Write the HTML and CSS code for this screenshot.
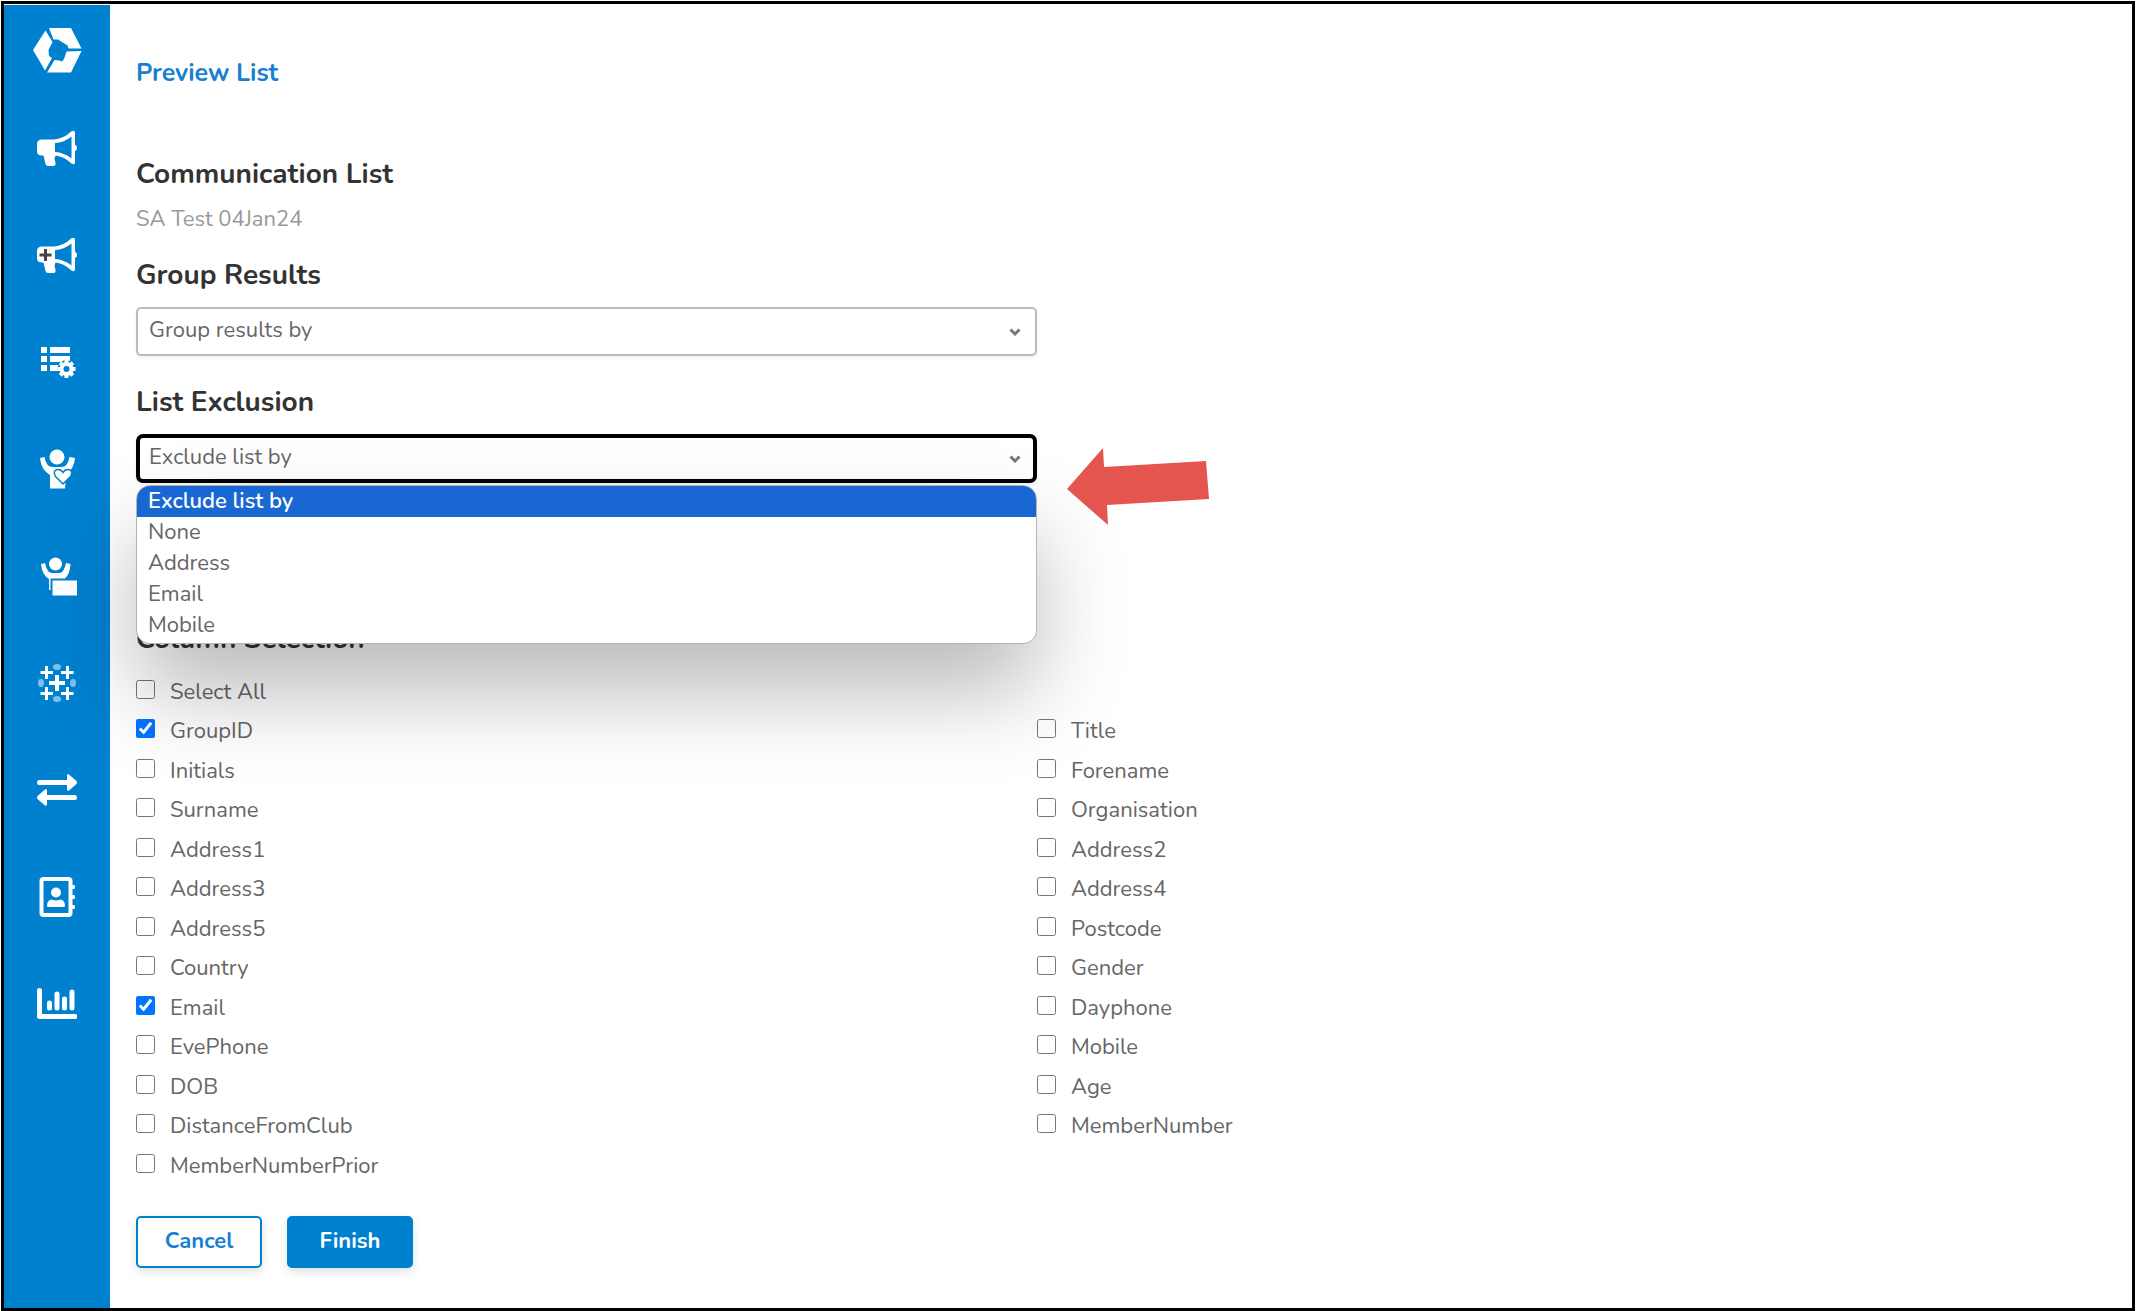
FILE: index.html
```html
<!DOCTYPE html>
<html lang="en">
<head>
<meta charset="utf-8">
<title>Preview List</title>
<link rel="stylesheet" href="styles.css">
</head>
<body>
<div class="app">
  <nav class="sidebar" aria-label="Main">
    <a class="logo" href="#" aria-label="Home"><svg width="50" height="46" viewBox="-1 0 50 46"><path d="M16 1H38L48.500 21.500H35.500L34.500 18.500 25 12.500 20.500 12.500ZM12.500 3.500 19.500 15 15.500 23 16 29 19 31 12 43.500 0 23ZM48.500 24 38 45.500H14L21.500 33 26.500 33.500 29 34.500 31 32 33.500 24.500Z"/></svg></a>
    <a href="#" aria-label="Campaigns"><svg viewBox="0 0 40 40"><path fill-rule="evenodd" d="M5 11.500H17Q26 11 34.500 3.200Q38 1.500 38 5V16.500Q40 17.500 40 20T38 23V34Q38 37.500 34.500 35.500Q27 28.500 19 27.500Q16.500 29.500 18.500 34.500Q19 38 16 38H11Q9 38 8.500 36L6.500 27.500H5Q0 27.500 0 23.500V16Q0 11.500 5 11.500ZM18 15V24Q27 24.500 34.500 30.500V8.500Q27 14.500 18 15Z"/></svg></a>
    <a href="#" aria-label="New campaign"><svg viewBox="0 0 40 40"><path fill-rule="evenodd" d="M5 11.500H17Q26 11 34.500 3.200Q38 1.500 38 5V16.500Q40 17.500 40 20T38 23V34Q38 37.500 34.500 35.500Q27 28.500 19 27.500Q16.500 29.500 18.500 34.500Q19 38 16 38H11Q9 38 8.500 36L6.500 27.500H5Q0 27.500 0 23.500V16Q0 11.500 5 11.500ZM18 15V24Q27 24.500 34.500 30.500V8.500Q27 14.500 18 15Z"/><path class="dark" d="M8.500 14V26M2.500 20H14.500"/></svg></a>
    <a href="#" aria-label="List settings"><svg viewBox="0 0 40 40"><path d="M4 5H10V11H4ZM13 5H33V11H13ZM4 14H10V20H4ZM13 14H33V20H13ZM4 23H10V29H4ZM13 23H24V29H13Z"/><circle cx="29.500" cy="27" r="9" class="cut"/><circle cx="29.500" cy="27" r="5" class="ring"/><path class="teeth" d="M29.500 21V18M29.500 33V36M23.500 27H20.500M35.500 27H38.500M25.300 22.800 23.200 20.700M33.700 22.800 35.800 20.700M25.300 31.200 23.200 33.300M33.700 31.200 35.800 33.300"/></svg></a>
    <a href="#" aria-label="Supporters"><svg viewBox="0 0 40 40"><circle cx="20" cy="8" r="7.500"/><path d="M3 9 7.500 8Q9 18 16 18H24Q31 18 32.500 8L38 9Q37 20 29 25L28 39.500H13V26Q4 21 3 9Z"/><path class="heart" d="M26 35 18.500 27.500Q15.500 22 20 20.500 24 20 26 23.500 28 20 32 20.500 36.500 22 33.500 27.500Z"/></svg></a>
    <a href="#" aria-label="Members"><svg viewBox="0 0 40 40"><circle cx="18.500" cy="8" r="6.500"/><path d="M4 8 8 7Q10 17 15 17H22Q27 17 29 7L33.500 8Q33 18 28 22.500H13.500V34H12V23Q5 19 4 8ZM15.500 24.500H40V39.500H15.500Z"/></svg></a>
    <a href="#" aria-label="Analytics"><svg viewBox="0 0 40 40"><path class="plus-lg" d="M20 12V28M12 20H28"/><path class="plus-sm" d="M9.500 3V16M3.500 9.500H16M30.500 3V16M24 9.500H36.500M9.500 24V37M3.500 30.500H16M30.500 24V37M24 30.500H36.500"/><g class="faint"><ellipse cx="20" cy="4" rx="4" ry="3"/><ellipse cx="20" cy="36" rx="4" ry="3"/><ellipse cx="4" cy="20" rx="3" ry="4"/><ellipse cx="36" cy="20" rx="3" ry="4"/></g></svg></a>
    <a href="#" aria-label="Transfers"><svg viewBox="0 0 40 40"><path d="M2 10H30V6Q30 3 32 4.500L39.500 11Q40.500 12.500 39.500 14L32 20.500Q30 21.500 30 19V15H2Q0 15 0 12.500T2 10ZM38 25H10V21Q10 18 8 19.500L.5 26Q-.5 27.500 .5 29L8 35.500Q10 36.500 10 34V30H38Q40 30 40 27.500T38 25Z"/></svg></a>
    <a href="#" aria-label="Contacts"><svg viewBox="0 0 40 40"><rect class="book" x="4.500" y="2" width="29" height="36" rx="2"/><path d="M33 8H37Q38 8 38 10T37 12H33ZM33 18H37Q38 18 38 20T37 22H33ZM33 28H37Q38 28 38 30T37 32H33ZM10 29Q10 22.500 15 22.500 19 24.500 23 22.500 28 22.500 28 29Q28 30 27 30H11Q10 30 10 29Z"/><circle cx="19" cy="15.500" r="5"/></svg></a>
    <a href="#" aria-label="Reports"><svg viewBox="0 0 40 40"><path class="axis" d="M2.500 6.500V32.500H38"/><path class="bars" d="M12.500 19V24M20 10V24M27.500 15V24M35 8V24"/></svg></a>
  </nav>

  <main class="content">
    <h1 class="page-title">Preview List</h1>
    <form class="form">
      <h2>Communication List</h2>
      <p class="list-name">SA Test 04Jan24</p>

      <h2><label for="group">Group Results</label></h2>
      <div class="field">
        <select id="group"><option>Group results by</option></select>
        <svg class="chevron" viewBox="0 0 12 8"><path d="M1.500 1.500 6 6 10.500 1.500"/></svg>
      </div>

      <h2><label for="exclude">List Exclusion</label></h2>
      <div class="field">
        <select id="exclude" class="focused"><option>Exclude list by</option><option>None</option><option>Address</option><option>Email</option><option>Mobile</option></select>
        <svg class="chevron" viewBox="0 0 12 8"><path d="M1.500 1.500 6 6 10.500 1.500"/></svg>
        <ul class="options" role="listbox" aria-label="List Exclusion">
          <li role="option" aria-selected="true" class="active">Exclude list by</li>
          <li role="option">None</li>
          <li role="option">Address</li>
          <li role="option">Email</li>
          <li role="option">Mobile</li>
        </ul>
        <svg class="pointer" viewBox="0 0 142 78"><path d="M0 41 36 0 37 19 139 13 142 51 40 57 41 77Z"/></svg>
      </div>

      <h2 class="columns-title">Column Selection</h2>
      <div class="columns">
        <label class="all"><input type="checkbox">Select All</label>
        <label><input type="checkbox" checked>GroupID</label>
        <label><input type="checkbox">Title</label>
        <label><input type="checkbox">Initials</label>
        <label><input type="checkbox">Forename</label>
        <label><input type="checkbox">Surname</label>
        <label><input type="checkbox">Organisation</label>
        <label><input type="checkbox">Address1</label>
        <label><input type="checkbox">Address2</label>
        <label><input type="checkbox">Address3</label>
        <label><input type="checkbox">Address4</label>
        <label><input type="checkbox">Address5</label>
        <label><input type="checkbox">Postcode</label>
        <label><input type="checkbox">Country</label>
        <label><input type="checkbox">Gender</label>
        <label><input type="checkbox" checked>Email</label>
        <label><input type="checkbox">Dayphone</label>
        <label><input type="checkbox">EvePhone</label>
        <label><input type="checkbox">Mobile</label>
        <label><input type="checkbox">DOB</label>
        <label><input type="checkbox">Age</label>
        <label><input type="checkbox">DistanceFromClub</label>
        <label><input type="checkbox">MemberNumber</label>
        <label><input type="checkbox">MemberNumberPrior</label>
      </div>

      <div class="actions">
        <button type="button" class="btn">Cancel</button>
        <button type="submit" class="btn primary">Finish</button>
      </div>
    </form>
  </main>
</div>
</body>
</html>
```
FILE: styles.css
```css
* { box-sizing: border-box; }

body {
  margin: 0;
  padding: 1px;
  background: #fff;
  color: #666;
  font: 22px/32px Nunito, "Open Sans", sans-serif;
}

.app {
  display: flex;
  min-height: calc(100vh - 1px);
  padding-top: 1px;
  border: 3px solid #000;
  overflow: hidden;
}

/* Sidebar */
.sidebar {
  flex: none;
  display: flex;
  flex-direction: column;
  align-items: center;
  gap: 67px;
  width: 106px;
  padding-top: 22px;
  background: #0081d0;
}
.sidebar a { display: block; height: 40px; }
.sidebar .logo { height: 46px; margin-bottom: -12px; }
.sidebar svg { display: block; fill: #fff; }
.sidebar a:not(.logo) svg { width: 40px; height: 40px; }
.sidebar .dark { stroke: #444; stroke-width: 3; }
.sidebar .cut { fill: #0081d0; }
.sidebar .ring { fill: none; stroke: #fff; stroke-width: 4; }
.sidebar .teeth { stroke: #fff; stroke-width: 4; }
.sidebar .heart { stroke: #0081d0; stroke-width: 1.5; }
.sidebar .plus-lg { stroke: #fff; stroke-width: 4; }
.sidebar .plus-sm { stroke: #fff; stroke-width: 3; }
.sidebar .faint { opacity: .5; }
.sidebar .book { fill: none; stroke: #fff; stroke-width: 4; }
.sidebar .axis { fill: none; stroke: #fff; stroke-width: 5; stroke-linecap: round; stroke-linejoin: round; }
.sidebar .bars { stroke: #fff; stroke-width: 5; stroke-linecap: round; }

/* Page */
.content {
  flex: 1;
  min-width: 0;
  padding: 52px 194px 36px 26px;
}
.page-title {
  margin: 0 0 65px;
  color: #1a7fd0;
  font-size: 25px;
  line-height: 32px;
}
h2 {
  margin: 0;
  color: #333;
  font-size: 28px;
  line-height: 40px;
}
.list-name { margin: 9px 0 20px; color: #999; }

.field { position: relative; width: 50%; margin: 12px 0 26px; }
.field select {
  display: block;
  width: 100%;
  height: 49px;
  padding: 0 11px 4px;
  appearance: none;
  border: 2px solid #bbb;
  border-radius: 5px;
  background: #fff;
  box-shadow: 0 2px 4px rgba(0, 0, 0, .06);
  color: #666;
  font: inherit;
}
.field .focused { padding: 0 9px 4px; border: 4px solid #000; border-radius: 7px; }
.chevron {
  position: absolute;
  top: 21px;
  right: 16px;
  width: 12px;
  height: 8px;
  fill: none;
  stroke: #777;
  stroke-width: 3;
}
.options {
  position: absolute;
  z-index: 2;
  top: 51px;
  left: 0;
  right: 0;
  margin: 0;
  padding: 0 0 2px;
  border: 1px solid #b5b5b5;
  border-radius: 14px;
  overflow: hidden;
  background: #fff;
  box-shadow: 0 48px 88px rgba(0, 0, 0, .27);
  line-height: 31px;
  list-style: none;
}
.options li { padding: 0 11px; }
.options .active { background: #1967d2; color: #fff; font-weight: 600; }
.pointer {
  position: absolute;
  z-index: 3;
  top: 14px;
  left: calc(100% + 30px);
  width: 142px;
  height: 78px;
  fill: #e5554f;
}

/* Column choices */
.columns-title { margin-top: 136px; }
.columns {
  display: grid;
  grid-template-columns: 1fr 1fr;
  grid-auto-rows: 39px 40px;
  align-items: start;
  margin-top: 14px;
  line-height: 39px;
}
.columns .all { grid-column: 1 / -1; }
.columns label { display: flex; gap: 15px; width: max-content; }
.columns input { width: 19px; height: 19px; margin: 7px 0 0; accent-color: #0075ff; }

.actions { display: flex; gap: 25px; margin-top: 30px; }
.btn {
  width: 126px;
  height: 52px;
  padding: 0 0 2px;
  border: 2px solid #0081d0;
  border-radius: 5px;
  background: #fff;
  box-shadow: 0 4px 10px rgba(0, 0, 0, .12);
  color: #1a7fd0;
  font: 700 22px/32px Nunito, "Open Sans", sans-serif;
}
.btn.primary { background: #0081d0; color: #fff; }
```
